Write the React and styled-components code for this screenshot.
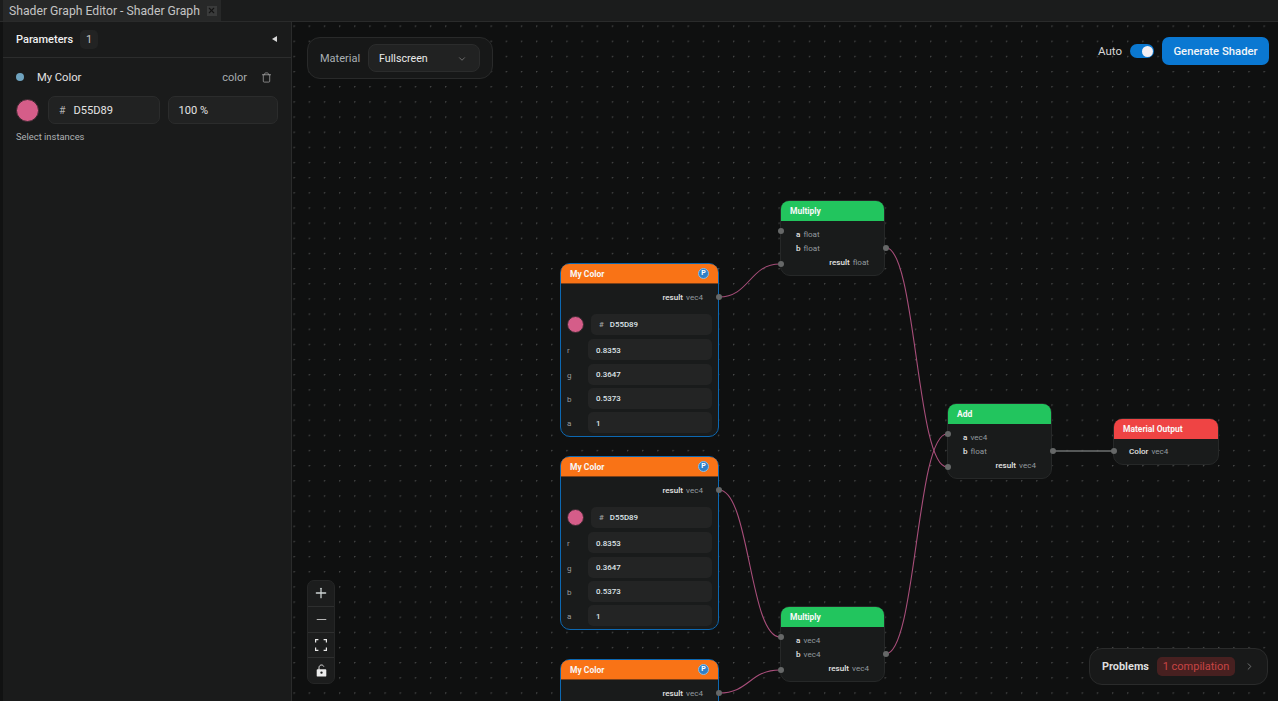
import React from "react";
import styled, { createGlobalStyle } from "styled-components";
import { Plus, Minus, Trash, ChevronDown, ChevronRight, X } from "lucide-react";

const Global = createGlobalStyle`
  html, body { margin: 0; height: 100%; overflow: hidden; background: #0f1010; }
  #root { height: 100%; }
  * { box-sizing: border-box; }
  body { font-family: Roboto, "Noto Sans", "Liberation Sans", sans-serif; color: #e6e6e6; }
`;

const Page = styled.div`
  width: 1278px; height: 701px; display: flex; flex-direction: column; overflow: hidden; background: #0f1010;
`;
const TabBar = styled.div`
  height: 22px; flex: none; display: flex; padding-left: 3px; background: #1b1c1c; border-bottom: 1px solid #2a2b2b;
`;
const Tab = styled.div`
  width: 218px; height: 21px; display: flex; align-items: center; gap: 7px; padding-left: 6px;
  background: #272828; color: #c4c4c4; font-size: 12.2px; white-space: nowrap;
`;
const TabClose = styled.span`
  width: 10px; height: 10px; display: flex; align-items: center; justify-content: center; background: #3a3b3b; color: #141414;
`;
const Body = styled.div`
  flex: 1; display: flex; min-height: 0;
`;
const Gutter = styled.div`
  width: 3px; flex: none; background: #111212;
`;
const Sidebar = styled.aside`
  width: 289px; flex: none; background: #1a1b1b; border-right: 1px solid #2a2b2b;
`;
const SideHead = styled.div`
  height: 36px; display: flex; align-items: center; padding: 0 14px 1px 13px; border-bottom: 1px solid #2c2d2d;
`;
const SideTitle = styled.span`
  font-size: 11px; font-weight: 500; color: #f0f0f0; width: 56px; white-space: nowrap;
`;
const CountBadge = styled.span`
  width: 18px; height: 19px; margin-left: 8px; display: flex; align-items: center; justify-content: center;
  background: #222323; border-radius: 5px; font-size: 11px; color: #c4c4c4;
`;
const Collapse = styled.svg`
  margin-left: auto; width: 5px; height: 6px; fill: #d8d8d8;
`;
const ParamRow = styled.div`
  display: flex; align-items: center; height: 14px; margin: 12px 0 0 13px; padding-right: 19px;
`;
const ParamDot = styled.span`
  width: 8px; height: 8px; border-radius: 50%; background: #6fa3bf; flex: none;
`;
const ParamName = styled.span`
  margin-left: 13px; font-size: 11.2px; color: #e2e2e2;
`;
const ParamType = styled.span`
  margin-left: auto; font-size: 11px; color: #a8adb0;
`;
const TrashBtn = styled.span`
  margin-left: 14px; display: flex; color: #a8a8a8;
`;
const ColorRow = styled.div`
  display: flex; align-items: center; margin: 12px 13px 0 13px;
`;
const Swatch = styled.span`
  width: ${p => p.$size}px; height: ${p => p.$size}px; border-radius: 50%; background: #d55d89; flex: none;
  border: 1px solid #3a2a30;
`;
const Field = styled.div`
  height: 28px; width: ${p => p.$w}px; margin-left: ${p => p.$ml}px; display: flex; align-items: center; padding: 1px 0 0 10px;
  background: #212222; border: 1px solid #2b2c2c; border-radius: 7px; font-size: 11.1px; color: #e4e4e4;
`;
const Hash = styled.span`
  color: #b0b0b0; margin-right: 8px; font-size: 10.5px;
`;
const Instances = styled.div`
  margin: 7px 0 0 13px; font-size: 9.4px; color: #aeb2b4;
`;

const Canvas = styled.main`
  position: relative; flex: 1; overflow: hidden;
  background-color: #0f1010;
  background-image: radial-gradient(circle at 0.75px 0.75px, #4a4b4b 0.6px, transparent 0.85px);
  background-size: 15.16px 15.16px;
  background-position: 1.5px 3.5px;
`;
const Edges = styled.svg`
  position: absolute; left: -292px; top: -22px; width: 1278px; height: 701px; pointer-events: none; z-index: 1;
`;
const NodeBox = styled.div`
  position: absolute; z-index: 2; left: ${p => p.$x - 292}px; top: ${p => p.$y - 22}px; width: ${p => p.$w}px;
  min-height: ${p => p.$minH || 0}px;
  background: #191b1b; border-radius: 10px;
  border: ${p => p.$selected ? "1.5px solid #0c68b2" : "1px solid #262828"};
`;
const NodeHead = styled.div`
  height: 20px; display: flex; align-items: center; justify-content: space-between; padding: 0 9px;
  background: ${p => p.$color}; border-radius: 8px 8px 0 0; font-size: 8.5px; font-weight: 700; color: #f8f8f8;
  border-bottom: ${p => p.$selected ? "1px solid #7c4018" : "none"};
`;
const PBadge = styled.span`
  width: 11px; height: 11px; border-radius: 50%; background: #2f80c8; border: 1px solid #8cbce4; color: #fff;
  display: flex; align-items: center; justify-content: center; font-size: 7px; font-weight: 700; line-height: 1;
`;
const Ports = styled.div`
  padding: ${p => p.$pad}; display: flex; flex-direction: column;
`;
const PortRow = styled.div`
  height: 13.7px; display: flex; align-items: center; gap: 3px; font-size: 8.1px;
  justify-content: ${p => p.$out ? "flex-end" : "flex-start"};
  margin-top: ${p => p.$gap || 0}px;
`;
const PortName = styled.span`
  color: #e2e2e2; font-weight: 500;
`;
const PortType = styled.span`
  color: #929a9f;
`;
const Port = styled.span`
  position: absolute; z-index: 3; width: 6px; height: 6px; border-radius: 50%; background: #666868;
  left: ${p => p.$x - 3}px; top: ${p => p.$y - 3}px;
`;
const Props = styled.div`
  padding: 10px 6px 0 6px; display: flex; flex-direction: column; gap: 3.3px;
`;
const PropRow = styled.div`
  display: flex; align-items: center; height: 21px; margin-bottom: ${p => p.$mb || 0}px;
`;
const PropLabel = styled.span`
  width: 21px; flex: none; font-size: 8.1px; color: #9a9a9a; padding-top: 1px;
`;
const PropField = styled.div`
  flex: 1; height: 21px; display: flex; align-items: center; padding: 1px 0 0 8px; background: #232424; border-radius: 5px;
  font-size: 7.9px; font-weight: 500; color: #dfe6ea; margin-left: ${p => p.$ml || 0}px;
`;
const PropHash = styled.span`
  margin-right: 6px; color: #a0a0a0;
`;
const NodeFoot = styled.div`
  height: 2.5px;
`;

const MaterialPanel = styled.div`
  position: absolute; z-index: 4; left: 15px; top: 15px; width: 186px; height: 42px; display: flex; align-items: center; padding: 0 12px 0 12px;
  background: #171818; border: 1px solid #292a2a; border-radius: 13px;
`;
const MatLabel = styled.span`
  font-size: 11px; color: #a9afb3; padding-top: 1px;
`;
const MatSelect = styled.div`
  width: 112px; height: 28px; flex: none; margin-left: auto; display: flex; align-items: center; justify-content: space-between; padding: 1px 12px 0 10px;
  background: #212222; border: 1px solid #2b2c2c; border-radius: 8px; font-size: 10.7px; color: #eaeaea;
`;
const TopRight = styled.div`
  position: absolute; z-index: 4; right: 9px; top: 15px; display: flex; align-items: center;
`;
const AutoLabel = styled.span`
  font-size: 11.5px; color: #d6d6d6; margin-right: 8px;
`;
const Toggle = styled.span`
  position: relative; width: 24px; height: 14px; border-radius: 7px; background: #0b78d0; margin-right: 8px; display: block;
`;
const Knob = styled.span`
  position: absolute; right: 1.5px; top: 1.5px; width: 11px; height: 11px; border-radius: 50%; background: #f4f0f4;
`;
const GenButton = styled.button`
  width: 107px; height: 28px; border: none; border-radius: 7px; background: #0a78d2; color: #f4f6f8;
  font-family: inherit; font-size: 11.3px; font-weight: 500; padding: 0;
`;
const Controls = styled.div`
  position: absolute; z-index: 4; left: 15px; top: 558px; width: 28px; height: 104px; display: flex; flex-direction: column;
  background: #1c1d1d; border: 1px solid #252626; border-radius: 7px; overflow: hidden;
`;
const CtrlBtn = styled.div`
  flex: 1; display: flex; align-items: center; justify-content: center; color: #e8e8e8;
  & + & { border-top: 1px solid #2e2f2f; }
`;
const Problems = styled.div`
  position: absolute; z-index: 4; right: 10px; top: 626px; width: 179px; height: 37px; display: flex; align-items: center; padding: 0 12px;
  background: #181919; border: 1px solid #2a2b2b; border-radius: 13px;
`;
const ProbTitle = styled.span`
  font-size: 10.9px; font-weight: 700; color: #dedede; width: 55px; white-space: nowrap;
`;
const ProbBadge = styled.span`
  width: 78px; height: 19px; display: flex; align-items: center; justify-content: center; border-radius: 5px;
  background: #472020; color: #c84444; font-size: 11px; white-space: nowrap;
`;
const ProbChevron = styled.span`
  margin-left: 9px; display: flex; color: #777878;
`;

const edge = (x1, y1, x2, y2) => {
  const m = (x1 + x2) / 2;
  return `M${x1} ${y1} C${m} ${y1} ${m} ${y2} ${x2} ${y2}`;
};
const EDGE_PATHS = [
  [719, 297, 780, 264], [719, 490, 780, 637], [719, 693, 780, 670],
  [885.5, 247.5, 947, 467], [885.5, 654, 947, 434],
];

const COMPS = [
  ["r", "0.8353"], ["g", "0.3647"], ["b", "0.5373"], ["a", "1"],
];

function ColorNode({ y, clipped }) {
  return (
    <NodeBox $x={560} $y={y} $w={159} $minH={173} $selected>
      <NodeHead $color="#f97316" $selected>
        <span>My Color</span>
        <PBadge>P</PBadge>
      </NodeHead>
      <Ports $pad="6px 15px 0 0">
        <PortRow $out><PortName>result</PortName><PortType>vec4</PortType></PortRow>
      </Ports>
      {!clipped && (
        <>
          <Props>
            <PropRow $mb={1.4}>
              <Swatch $size={17} />
              <PropField $ml={7}><PropHash>#</PropHash>D55D89</PropField>
            </PropRow>
            {COMPS.map(([k, v]) => (
              <PropRow key={k}><PropLabel>{k}</PropLabel><PropField>{v}</PropField></PropRow>
            ))}
          </Props>
          <NodeFoot />
        </>
      )}
      <Port $x={158} $y={33} />
    </NodeBox>
  );
}

function MathNode({ x, y, title, color, w = 105, rows, result, ports, pad = "6px 15px 6px 15px" }) {
  return (
    <NodeBox $x={x} $y={y} $w={w}>
      <NodeHead $color={color}><span>{title}</span></NodeHead>
      <Ports $pad={pad}>
        {rows.map(([n, t]) => (
          <PortRow key={n}><PortName>{n}</PortName><PortType>{t}</PortType></PortRow>
        ))}
        {result && <PortRow $out $gap={1}><PortName>result</PortName><PortType>{result}</PortType></PortRow>}
      </Ports>
      {ports.map(([px, py]) => <Port key={`${px}-${py}`} $x={px} $y={py} />)}
    </NodeBox>
  );
}

const FitIcon = () => (
  <svg width="12" height="12" viewBox="0 0 12 12" fill="none" stroke="currentColor" strokeWidth="1.2">
    <path d="M.6 3.4V.6h2.8M8.6.6h2.8v2.8M11.4 8.6v2.8H8.6M3.4 11.4H.6V8.6" />
  </svg>
);
const LockIcon = () => (
  <svg width="11" height="13" viewBox="0 0 11 13">
    <path d="M3 6V3.600C3 2 4.200 1 5.500 1c1 0 1.900.5 2.300 1.500" fill="none" stroke="#e8e8e8" strokeWidth="1" />
    <path fillRule="evenodd" fill="#ececec" d="M1.600 5.200h7.800c.5 0 .9.4.9.9v5.600c0 .5-.4.9-.9.9H1.600c-.5 0-.9-.4-.9-.9V6.100c0-.5.4-.9.9-.9zM5.500 7.400a1.200 1.200 0 1 0 0 2.400 1.200 1.200 0 0 0 0-2.400z" />
  </svg>
);

export default function App() {
  return (
    <Page>
      <Global />
      <TabBar>
        <Tab>
          Shader Graph Editor - Shader Graph
          <TabClose><X size={9} strokeWidth={3} /></TabClose>
        </Tab>
      </TabBar>
      <Body>
        <Gutter />
        <Sidebar>
          <SideHead>
            <SideTitle>Parameters</SideTitle>
            <CountBadge>1</CountBadge>
            <Collapse viewBox="0 0 5 6"><path d="M5 0v6L0 3z" /></Collapse>
          </SideHead>
          <ParamRow>
            <ParamDot />
            <ParamName>My Color</ParamName>
            <ParamType>color</ParamType>
            <TrashBtn><Trash size={11} strokeWidth={1.6} /></TrashBtn>
          </ParamRow>
          <ColorRow>
            <Swatch $size={23} />
            <Field $w={112} $ml={9}><Hash>#</Hash>D55D89</Field>
            <Field $w={111} $ml={8}>100 %</Field>
          </ColorRow>
          <Instances>Select instances</Instances>
        </Sidebar>
        <Canvas>
          <Edges viewBox="0 0 1278 701">
            <path d="M1052 451H1113" stroke="#6e7070" strokeWidth="1.3" fill="none" />
            {EDGE_PATHS.map(([a, b, c, d]) => (
              <path key={`${a}-${b}`} d={edge(a, b, c, d)} stroke="#a84e7a" strokeWidth="1.1" fill="none" />
            ))}
          </Edges>
          <MaterialPanel>
            <MatLabel>Material</MatLabel>
            <MatSelect>Fullscreen<ChevronDown size={10} color="#7c7c7c" /></MatSelect>
          </MaterialPanel>
          <TopRight>
            <AutoLabel>Auto</AutoLabel>
            <Toggle><Knob /></Toggle>
            <GenButton>Generate Shader</GenButton>
          </TopRight>

          <ColorNode y={263} />
          <ColorNode y={456} />
          <ColorNode y={659} clipped />

          <MathNode x={780} y={200} title="Multiply" color="#22c55e"
            rows={[["a", "float"], ["b", "float"]]} result="float"
            ports={[[0, 30], [0, 63], [105, 47]]} />
          <MathNode x={780} y={606} title="Multiply" color="#22c55e"
            rows={[["a", "vec4"], ["b", "vec4"]]} result="vec4"
            ports={[[0, 30], [0, 63], [105, 47]]} />
          <MathNode x={947} y={403} title="Add" color="#22c55e"
            rows={[["a", "vec4"], ["b", "float"]]} result="vec4"
            ports={[[0, 30], [0, 63], [105, 47]]} />
          <MathNode x={1113} y={418} w={106} title="Material Output" color="#ef4444"
            rows={[["Color", "vec4"]]} pad="5px 15px 6px 15px"
            ports={[[0, 32]]} />

          <Controls>
            <CtrlBtn><Plus size={16} strokeWidth={1.9} color="#cdd4d4" /></CtrlBtn>
            <CtrlBtn><Minus size={15} strokeWidth={1.2} /></CtrlBtn>
            <CtrlBtn><FitIcon /></CtrlBtn>
            <CtrlBtn><LockIcon /></CtrlBtn>
          </Controls>
          <Problems>
            <ProbTitle>Problems</ProbTitle>
            <ProbBadge>1 compilation</ProbBadge>
            <ProbChevron><ChevronRight size={11} /></ProbChevron>
          </Problems>
        </Canvas>
      </Body>
    </Page>
  );
}
